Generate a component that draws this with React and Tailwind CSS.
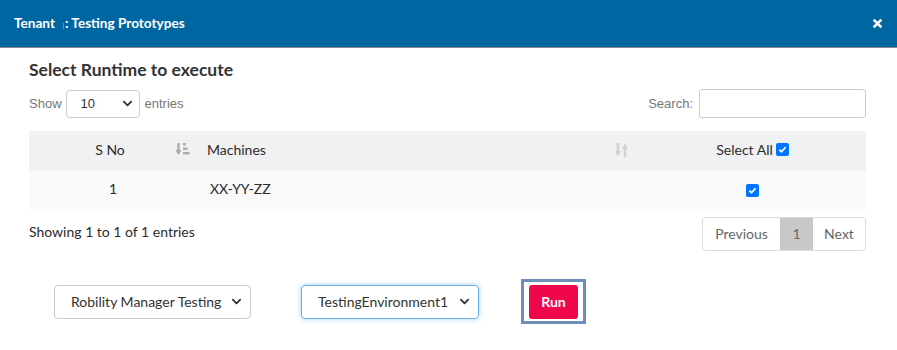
import { useState } from "react";

const ui = { fontFamily: "Lato, 'Open Sans', sans-serif" };
const arial = { fontFamily: "'Liberation Sans', Arial, sans-serif" };

function Chevron() {
  return (
    <svg width="11" height="11" viewBox="0 0 12 12" className="shrink-0">
      <path d="M2 4l4 4 4-4" fill="none" stroke="#333" strokeWidth="2" strokeLinecap="round" strokeLinejoin="round" />
    </svg>
  );
}

function SortAmount() {
  return (
    <svg width="15" height="15" viewBox="0 0 15 15">
      <path d="M3.5 1v10" stroke="#aaa" strokeWidth="2.4" />
      <path d="M0.5 8L3.5 13l3-5z" fill="#aaa" />
      <rect x="8" y="1" width="3" height="2.4" fill="#aaa" />
      <rect x="8" y="5.5" width="4.5" height="2.4" fill="#aaa" />
      <rect x="8" y="10" width="6.5" height="2.4" fill="#aaa" />
    </svg>
  );
}

function SortBoth() {
  return (
    <svg width="15" height="16" viewBox="0 0 15 16">
      <path d="M4 1v11" stroke="#d2d2d2" strokeWidth="2.6" />
      <path d="M1 9L4 14.5l3-5.5z" fill="#d2d2d2" />
      <path d="M11 4v11" stroke="#d2d2d2" strokeWidth="2.6" />
      <path d="M8 7L11 1.5l3 5.5z" fill="#d2d2d2" />
    </svg>
  );
}

function Check() {
  return (
    <span className="inline-flex w-[13px] h-[13px] rounded-[2px] bg-[#0075ff] items-center justify-center">
      <svg width="9" height="9" viewBox="0 0 10 10">
        <path d="M1.5 5.2l2.3 2.3L8.5 2.5" fill="none" stroke="#fff" strokeWidth="2" />
      </svg>
    </span>
  );
}

export default function App() {
  const [page] = useState(1);

  return (
    <div className="w-[897px] h-[350px] bg-white overflow-hidden" style={ui}>
      {/* Modal header */}
      <div className="h-[48px] bg-[#0066a1] border-b border-[#8a8a8a] flex items-center justify-between pl-[14px] pr-[14px]">
        <div className="flex items-center text-white text-[13.6px] font-bold">
          <span>Tenant</span>
          <span className="ml-[8px] mr-[1px] w-px h-[6px] mt-[6px] bg-[#5f90b8]" />
          <span>: Testing Prototypes</span>
        </div>
        <svg width="11" height="11" viewBox="0 0 10 10">
          <path d="M1.5 1.5l7 7M8.5 1.5l-7 7" stroke="#fff" strokeWidth="2.4" />
        </svg>
      </div>

      <div className="px-[29px] pr-[31px]">
        <h2 className="mt-[11px] text-[17.5px] font-bold text-[#333] leading-[22px]">Select Runtime to execute</h2>

        {/* Length + search */}
        <div className="mt-[8px] flex items-center justify-between h-[29px]" style={arial}>
          <div className="flex items-center text-[13px] text-[#777]">
            <span>Show</span>
            <div className="ml-[4px] w-[74px] h-[28px] border border-[#ccc] rounded-[4px] flex items-center justify-between pl-[14px] pr-[6px] text-[#333]">
              <span>10</span>
              <Chevron />
            </div>
            <span className="ml-[5px]">entries</span>
          </div>
          <div className="flex items-center text-[13px] text-[#777]">
            <span>Search:</span>
            <div className="ml-[6px] w-[167px] h-[29px] border border-[#ccc] rounded-[3px]" />
          </div>
        </div>

        {/* Table */}
        <div className="mt-[13px] text-[14px] text-[#2b2b2b]">
          <div className="h-[40px] bg-[#f0f1f3] flex items-center pb-[3px]">
            <div className="w-[166px] flex items-center pr-[5px]">
              <span className="flex-1 text-center pl-[16px]">S No</span>
              <SortAmount />
            </div>
            <div className="w-[440px] flex items-center pl-[12px] pr-[6px]">
              <span className="flex-1">Machines</span>
              <SortBoth />
            </div>
            <div className="flex-1 flex items-center justify-center gap-[3px] pl-[4px]">
              <span>Select All</span>
              <Check />
            </div>
          </div>
          <div className="h-[38px] bg-[#f9f9f9] flex items-center pb-[3px]">
            <div className="w-[166px] text-center pl-[2px]">{page}</div>
            <div className="w-[440px] pl-[15px]">XX-YY-ZZ</div>
            <div className="flex-1 flex justify-center pl-[3px] pt-[3px]">
              <Check />
            </div>
          </div>
        </div>

        {/* Info + pagination */}
        <div className="mt-[8px] flex items-center justify-between">
          <span className="text-[14px] text-[#2b2b2b] pb-[5px]">Showing 1 to 1 of 1 entries</span>
          <div className="flex h-[34px] border border-[#ddd] rounded-[3px] overflow-hidden text-[14px] text-[#666]">
            <span className="w-[77px] flex items-center justify-center pb-[2px]">Previous</span>
            <span className="w-[33px] flex items-center justify-center bg-[#c8c8c8] pb-[2px]">1</span>
            <span className="w-[52px] flex items-center justify-center pb-[2px]">Next</span>
          </div>
        </div>
      </div>

      {/* Bottom controls */}
      <div className="mt-[28px] pl-[54px] flex items-center text-[14px] text-[#333]">
        <div className="w-[197px] h-[34px] border border-[#ccc] rounded-[4px] flex items-center justify-between pl-[16px] pr-[8px] pb-[1px]">
          <span>Robility Manager Testing</span>
          <Chevron />
        </div>
        <div className="ml-[50px] w-[178px] h-[34px] border border-[#66afe9] rounded-[4px] shadow-[0_0_5px_rgba(102,175,233,0.6)] flex items-center justify-between pl-[16px] pr-[8px] pb-[1px]">
          <span>TestingEnvironment1</span>
          <Chevron />
        </div>
        <div className="ml-[42px] w-[65px] h-[45px] border-[3px] border-[#6f8fbb] flex items-center justify-center">
          <span className="w-[49px] h-[34px] bg-[#f0064a] rounded-[3px] text-white font-bold flex items-center justify-center">Run</span>
        </div>
      </div>
    </div>
  );
}
